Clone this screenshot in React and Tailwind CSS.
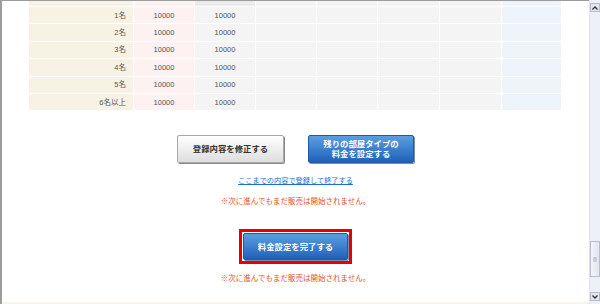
const rows = ["1名", "2名", "3名", "4名", "5名", "6名以上"];

const jp = { fontFamily: '"Liberation Sans", "Noto Sans CJK JP", sans-serif' };

function Row({ label, top }) {
  const h = top ? "h-[5px]" : "h-[16.4px]";
  return (
    <div className={`grid grid-cols-[104px_60px_60px_60px_60px_61px_61px_59px] gap-x-px ${h}`}>
      <div className="bg-[#f8f2e4] flex items-center justify-end pr-[7px]">{label}</div>
      <div className="bg-[#fdf1f1] flex items-center justify-center">{top ? "" : "10000"}</div>
      <div className={`${top ? "bg-[#ebebeb]" : "bg-[#f4f4f4]"} flex items-center justify-center`}>
        {top ? "" : "10000"}
      </div>
      <div className="bg-[#f4f4f4]" />
      <div className="bg-[#f4f4f4]" />
      <div className="bg-[#f4f4f4]" />
      <div className="bg-[#f4f4f4]" />
      <div className="bg-[#edf4fb]" />
    </div>
  );
}

export default function App() {
  return (
    <div className="w-[600px] h-[304px] overflow-hidden bg-white flex" style={jp}>
      <div className="flex-1 border-l-2 border-t border-[#9c9c9c] flex flex-col relative">
        <div className="pl-[27px] flex flex-col gap-y-px bg-white text-[7.5px] text-[#555]">
          <Row top />
          {rows.map((r) => (
            <Row key={r} label={r} />
          ))}
        </div>

        <div className="mt-[25px] flex justify-center gap-[24px]">
          <button className="w-[107px] h-[28px] border border-[#a9a9a9] rounded-[2px] bg-gradient-to-b from-[#ffffff] to-[#dedede] shadow-[1px_1px_0_#8a8a8a] text-[8.4px] font-bold text-[#333]">
            登録内容を修正する
          </button>
          <button className="w-[106px] h-[28px] border border-[#1f5aa8] rounded-[2px] bg-gradient-to-b from-[#5b9ee2] to-[#1f61b8] shadow-[1px_1px_0_#7d8ea8] text-[8.4px] font-bold text-white leading-[10px]">
            残りの部屋タイプの
            <br />
            料金を設定する
          </button>
        </div>

        <div className="mt-[13px] text-center text-[7.2px] leading-[10px]">
          <a className="text-[#1a6fd0] underline">ここまでの内容で登録して終了する</a>
        </div>
        <div className="mt-[11px] text-center text-[7.5px] leading-[10px] text-[#e0522a]">
          ※次に進んでもまだ販売は開始されません。
        </div>

        <div className="mt-[22px] flex justify-center">
          <div className="border-[3px] border-[#e60000] p-px bg-white">
            <button className="w-[105px] h-[27px] border border-[#1f5aa8] rounded-[2px] bg-gradient-to-b from-[#5b9ee2] to-[#1f61b8] shadow-[1px_1px_0_#7d8ea8] text-[8.4px] font-bold text-white block">
              料金設定を完了する
            </button>
          </div>
        </div>
        <div className="mt-[10px] text-center text-[7.5px] leading-[10px] text-[#e0522a]">
          ※次に進んでもまだ販売は開始されません。
        </div>

        <div className="absolute bottom-0 left-0 right-0 h-[2px] bg-[#f8f4ea]" />
      </div>

      <div className="w-[11px] h-full bg-[#eef0f8] border-l border-[#dfe2ec] flex flex-col items-center">
        <div className="mt-[3px] w-[10px] h-[9px] border border-[#b8bccb] bg-[#e4e6ee] flex items-center justify-center">
          <svg width="6" height="4" viewBox="0 0 6 4">
            <path d="M0.5 3.5 L3 1 L5.5 3.5" stroke="#333" strokeWidth="1.3" fill="none" />
          </svg>
        </div>
        <div className="mt-[229px] w-[10px] h-[36px] border border-[#b8bccb] bg-gradient-to-r from-[#f4f5fa] to-[#e2e5ee] flex items-center justify-center">
          <div className="w-[4px] h-[5px] bg-[#c8ccd8]" />
        </div>
        <div className="mt-[15px] w-[10px] h-[9px] border border-[#b8bccb] bg-[#e4e6ee] flex items-center justify-center">
          <svg width="6" height="4" viewBox="0 0 6 4">
            <path d="M0.5 0.5 L3 3 L5.5 0.5" stroke="#333" strokeWidth="1.3" fill="none" />
          </svg>
        </div>
      </div>
    </div>
  );
}
